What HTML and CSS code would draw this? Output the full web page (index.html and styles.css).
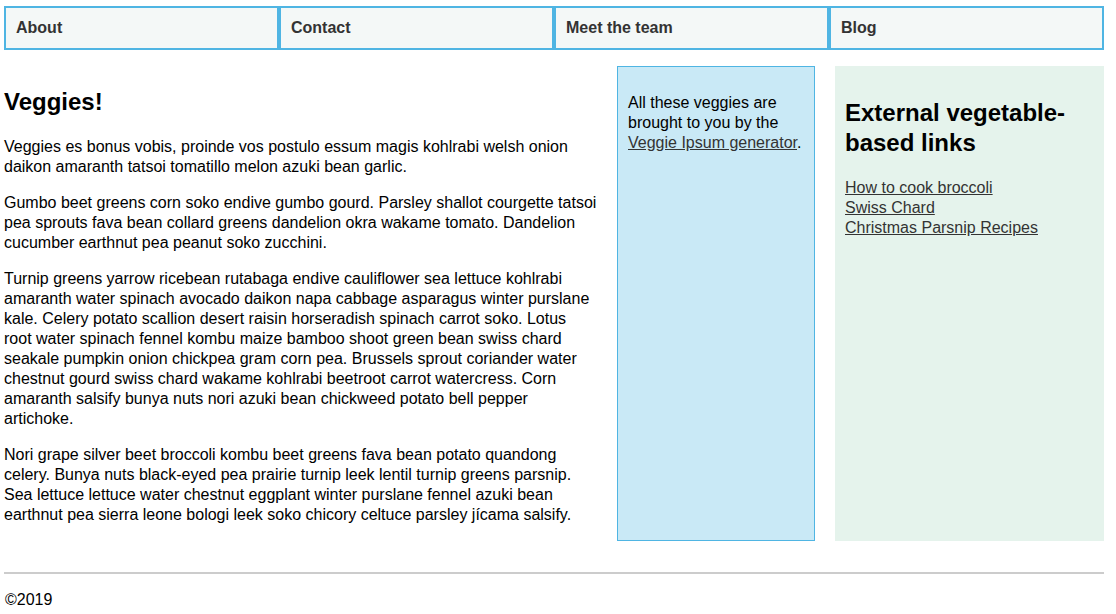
FILE: index.html
```html
<!DOCTYPE html>
<html lang="en">
<head>
<meta charset="utf-8">
<title>Veggies</title>
<link rel="stylesheet" href="styles.css">
</head>
<body>
<div class="wrapper">
  <nav class="nav">
    <ul class="nav-list">
      <li class="nav-item">About</li>
      <li class="nav-item">Contact</li>
      <li class="nav-item">Meet the team</li>
      <li class="nav-item">Blog</li>
    </ul>
  </nav>
  <div class="columns">
    <main class="main">
      <h2 class="title">Veggies!</h2>
      <p>Veggies es bonus vobis, proinde vos postulo essum magis kohlrabi welsh onion daikon amaranth tatsoi tomatillo melon azuki bean garlic.</p>
      <p>Gumbo beet greens corn soko endive gumbo gourd. Parsley shallot courgette tatsoi pea sprouts fava bean collard greens dandelion okra wakame tomato. Dandelion cucumber earthnut pea peanut soko zucchini.</p>
      <p>Turnip greens yarrow ricebean rutabaga endive cauliflower sea lettuce kohlrabi amaranth water spinach avocado daikon napa cabbage asparagus winter purslane kale. Celery potato scallion desert raisin horseradish spinach carrot soko. Lotus root water spinach fennel kombu maize bamboo shoot green bean swiss chard seakale pumpkin onion chickpea gram corn pea. Brussels sprout coriander water chestnut gourd swiss chard wakame kohlrabi beetroot carrot watercress. Corn amaranth salsify bunya nuts nori azuki bean chickweed potato bell pepper artichoke.</p>
      <p>Nori grape silver beet broccoli kombu beet greens fava bean potato quandong celery. Bunya nuts black-eyed pea prairie turnip leek lentil turnip greens parsnip. Sea lettuce lettuce water chestnut eggplant winter purslane fennel azuki bean earthnut pea sierra leone bologi leek soko chicory celtuce parsley jícama salsify.</p>
    </main>
    <aside class="credit">
      <p>All these veggies are brought to you by the <a class="link" href="#">Veggie Ipsum generator</a>.</p>
    </aside>
    <aside class="links">
      <h2 class="title">External vegetable-based links</h2>
      <ul class="link-list">
        <li><a class="link" href="#">How to cook broccoli</a></li>
        <li><a class="link" href="#">Swiss Chard</a></li>
        <li><a class="link" href="#">Christmas Parsnip Recipes</a></li>
      </ul>
    </aside>
  </div>
  <hr class="rule">
  <footer class="footer">
    <p>©2019</p>
  </footer>
</div>
</body>
</html>
```

FILE: styles.css
```css
html, body {
  margin: 0;
  padding: 0;
}

body {
  font-family: "Liberation Sans", Arial, sans-serif;
  font-size: 16px;
  line-height: 1.25;
  color: #000;
  background: #fff;
}

.wrapper {
  width: 1100px;
  margin-left: 4px;
  padding-top: 6px;
}

.nav-list {
  display: flex;
  list-style: none;
  margin: 0;
  padding: 0;
}

.nav-item {
  flex: 1;
  border: 2px solid #4fb5e3;
  background: #f4f8f7;
  padding: 10px 10px 10px;
  font-weight: bold;
  color: #333;
}

.columns {
  display: grid;
  grid-template-columns: 593px 198px 1fr;
  column-gap: 20px;
  margin-top: 16px;
}

.main {
  padding-top: 1px;
}

.main p {
  margin: 16px 0;
}

.title {
  font-size: 24px;
  line-height: 30px;
  margin: 20px 0;
}

.credit {
  background: #c9e9f6;
  border: 1px solid #4fb5e3;
  padding: 0 10px;
}

.credit p {
  margin: 26px 0 16px;
}

.links {
  background: #e5f3ec;
  padding: 12px 10px 10px;
}

.links .title {
  margin-top: 20px;
}

.link-list {
  list-style: none;
  margin: 0;
  padding: 0;
}

.link {
  color: #333;
  text-decoration: underline;
}

.rule {
  border: 0;
  border-top: 2px solid #ccc;
  margin: 31px 0 0;
  height: 0;
}

.footer p {
  margin: 16px 0 0;
  padding-left: 1px;
}
```
